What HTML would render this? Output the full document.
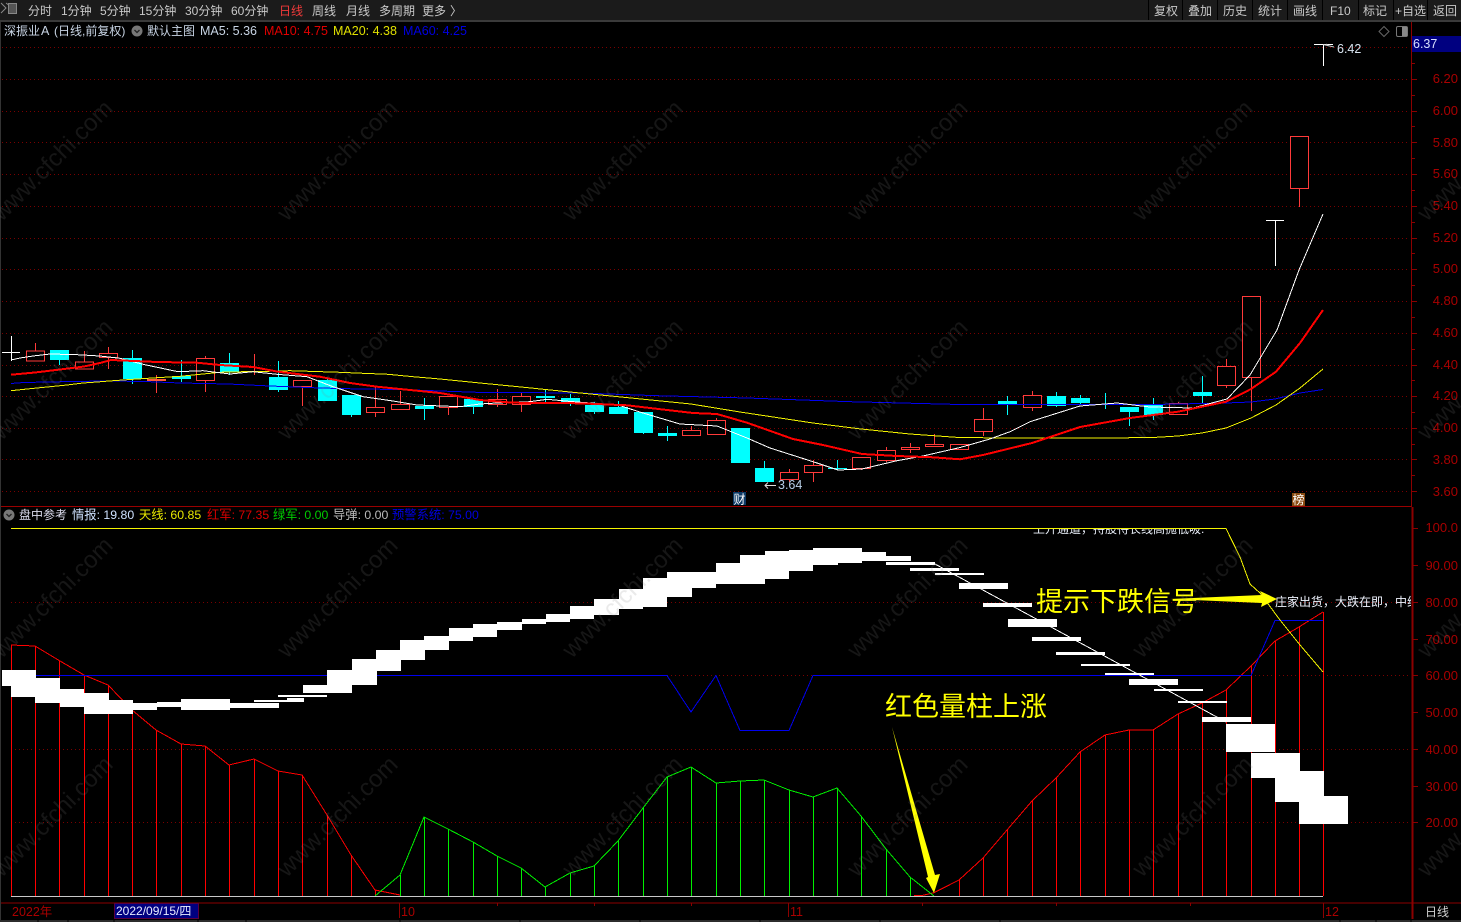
<!DOCTYPE html>
<html lang="zh">
<head>
<meta charset="utf-8">
<title>深振业A</title>
<style>
html,body{margin:0;padding:0;background:#000;width:1461px;height:922px;overflow:hidden}
svg{display:block;position:absolute;left:0;top:0}
text{font-family:"Liberation Sans","Noto Sans CJK SC",sans-serif;font-size:12px}
.tb text{fill:#c9c9c9}
.ax text{fill:#a80000;font-size:13px;text-anchor:end}
.wm text{font-size:24px;fill:rgba(128,128,128,.17);text-anchor:middle}
</style>
</head>
<body>
<svg width="1461" height="922" viewBox="0 0 1461 922" xmlns="http://www.w3.org/2000/svg" shape-rendering="crispEdges">
<defs>
<clipPath id="cp1"><rect x="1000" y="529" width="260" height="10"/></clipPath>
<clipPath id="cp2"><rect x="1270" y="590" width="141" height="25"/></clipPath>
</defs>

<!-- toolbar -->
<rect x="0" y="0" width="1461" height="20" fill="#1b1b1b"/>
<rect x="0" y="20" width="1461" height="2" fill="#3a3a3a"/>
<g fill="none" stroke="#8a8a8a" stroke-width="1" shape-rendering="geometricPrecision">
<path d="M1 3L6 8L1 13M6 3L10 6"/>
<rect x="8.500" y="3.500" width="8" height="10" fill="#555" stroke="#888"/>
</g>
<g class="tb">
<text x="28" y="15">分时</text>
<text x="61" y="15">1分钟</text>
<text x="100" y="15">5分钟</text>
<text x="139" y="15">15分钟</text>
<text x="185" y="15">30分钟</text>
<text x="231" y="15">60分钟</text>
<text x="279" y="15" style="fill:#f03a3a">日线</text>
<text x="312" y="15">周线</text>
<text x="346" y="15">月线</text>
<text x="379" y="15">多周期</text>
<text x="422" y="15">更多</text>
<text x="450" y="15">〉</text>
<text x="1154" y="15">复权</text>
<text x="1188" y="15">叠加</text>
<text x="1223" y="15">历史</text>
<text x="1258" y="15">统计</text>
<text x="1293" y="15">画线</text>
<text x="1330" y="15">F10</text>
<text x="1363" y="15">标记</text>
<text x="1395" y="15">+自选</text>
<text x="1433" y="15">返回</text>
</g>
<path d="M1148.500 0V20M1182.500 0V20M1217.500 0V20M1252.500 0V20M1287.500 0V20M1322.500 0V20M1358.500 0V20M1393.500 0V20M1427.500 0V20" stroke="#000" stroke-width="1"/>

<!-- grid -->
<g stroke="#7a0000" stroke-width="1" stroke-dasharray="1 3" fill="none">
<path d="M2 47.500H1408M2 79.500H1408M2 111.500H1408M2 142.500H1408M2 174.500H1408M2 206.500H1408M2 238.500H1408M2 269.500H1408M2 301.500H1408M2 333.500H1408M2 365.500H1408M2 396.500H1408M2 428.500H1408M2 459.500H1408M2 491.500H1408"/>
<path d="M11 602.500H1408M11 675.500H1408M11 749.500H1408M11 822.500H1408"/>
</g>

<!-- legend top -->
<text x="4" y="35" fill="#c8d4e4">深振业</text>
<text x="41" y="35" fill="#c8d4e4" style="font-size:12.500px">A</text>
<text x="54" y="35" fill="#c8d4e4">(日线,前复权)</text>
<circle cx="137" cy="31" r="5.500" fill="#777" shape-rendering="geometricPrecision"/>
<path d="M134.500 30L137 32.500L139.500 30" stroke="#222" stroke-width="1.300" fill="none" shape-rendering="geometricPrecision"/>
<text x="147" y="35" fill="#c8d4e4">默认主图</text>
<text x="200" y="35" fill="#c8d4e4" style="font-size:12.500px">MA5: 5.36</text>
<text x="264" y="35" fill="#e00000" style="font-size:12.500px">MA10: 4.75</text>
<text x="333" y="35" fill="#e0e000" style="font-size:12.500px">MA20: 4.38</text>
<text x="403" y="35" fill="#0000e0" style="font-size:12.500px">MA60: 4.25</text>
<path d="M1384 26.500L1389 31.500L1384 36.500L1379 31.500Z" fill="none" stroke="#666" shape-rendering="geometricPrecision"/>
<rect x="1396.500" y="26.500" width="11" height="10" rx="1.500" fill="none" stroke="#777" shape-rendering="geometricPrecision"/>
<rect x="1402" y="27" width="5" height="9" fill="#888"/>

<!-- candles wicks -->
<path fill="none" stroke="#ff3a3a" stroke-width="1" d="M35.500 343V351M84.500 351V362M108.500 347V369M156.500 375V393M205.500 356V392M254.500 354V375M302.500 380V406M375.500 387V417M400.500 391V404M448.500 407V415M497.500 389V407M521.500 393V412M691.500 426V436M716.500 418V421M789.500 469V482M813.500 460V482M861.500 468V470M886.500 447V462M910.500 443V453M934.500 434V447M983.500 408V436M1032.500 391V411M1178.500 402V404M1226.500 359V388M1251.500 377V411M1299.500 188V207"/>
<path fill="none" stroke="#00ffff" stroke-width="1" d="M59.500 360V365M132.500 350V384M181.500 360V382M229.500 353V375M278.500 361V392M327.500 378V401M351.500 395V417M424.500 398V420M473.500 399V414M545.500 390V403M570.500 394V406M594.500 402V414M618.500 401V414M643.500 412V434M667.500 426V441M764.500 461V482M837.500 460V470M1007.500 396V415M1056.500 392V407M1080.500 395V405M1105.500 393V409M1129.500 407V426M1153.500 398V420M1202.500 376V403"/>
<!-- cyan bodies -->
<g fill="#00ffff">
<rect x="50" y="350" width="19" height="10"/>
<rect x="123" y="358" width="19" height="21"/>
<rect x="172" y="376" width="19" height="3"/>
<rect x="220" y="363" width="19" height="9"/>
<rect x="269" y="377" width="19" height="13"/>
<rect x="318" y="380" width="19" height="21"/>
<rect x="342" y="395" width="19" height="20"/>
<rect x="415" y="406" width="19" height="3"/>
<rect x="464" y="399" width="19" height="8"/>
<rect x="536" y="396" width="19" height="2"/>
<rect x="561" y="398" width="19" height="5"/>
<rect x="585" y="405" width="19" height="7"/>
<rect x="609" y="407" width="19" height="7"/>
<rect x="634" y="412" width="19" height="21"/>
<rect x="658" y="433" width="19" height="3"/>
<rect x="731" y="428" width="19" height="35"/>
<rect x="755" y="468" width="19" height="14"/>
<rect x="828" y="468" width="19" height="1"/>
<rect x="998" y="401" width="19" height="3"/>
<rect x="1047" y="396" width="19" height="10"/>
<rect x="1071" y="398" width="19" height="5"/>
<rect x="1096" y="404" width="19" height="1"/>
<rect x="1120" y="407" width="19" height="5"/>
<rect x="1144" y="405" width="19" height="10"/>
<rect x="1193" y="392" width="19" height="4"/>
</g>
<!-- red hollow bodies -->
<g fill="#000" stroke="#ff3a3a" stroke-width="1">
<rect x="26.500" y="351" width="18" height="10"/>
<rect x="75.500" y="362" width="18" height="7"/>
<rect x="99.500" y="353.500" width="18" height="4"/>
<rect x="196.500" y="358.500" width="18" height="22"/>
<rect x="293.500" y="380.500" width="18" height="6"/>
<rect x="366.500" y="407.500" width="18" height="5"/>
<rect x="391.500" y="404.500" width="18" height="5"/>
<rect x="439.500" y="396.500" width="18" height="11"/>
<rect x="488.500" y="399.500" width="18" height="5"/>
<rect x="512.500" y="396.500" width="18" height="8"/>
<rect x="682.500" y="430.500" width="18" height="5"/>
<rect x="707.500" y="420.500" width="18" height="14"/>
<rect x="780.500" y="472.500" width="18" height="7"/>
<rect x="804.500" y="465.500" width="18" height="7"/>
<rect x="852.500" y="457.500" width="18" height="11"/>
<rect x="877.500" y="450.500" width="18" height="10"/>
<rect x="901.500" y="447.500" width="18" height="2"/>
<rect x="925.500" y="444.500" width="18" height="2"/>
<rect x="950.500" y="444.500" width="18" height="5"/>
<rect x="974.500" y="419.500" width="18" height="12"/>
<rect x="1023.500" y="395.500" width="18" height="12"/>
<rect x="1169.500" y="403.500" width="18" height="11"/>
<rect x="1217.500" y="366.500" width="18" height="19"/>
<rect x="1242.500" y="296.500" width="18" height="81"/>
<rect x="1290.500" y="136.500" width="18" height="52"/>
</g>
<rect x="147" y="379" width="19" height="2" fill="#ff5a3a"/>
<!-- white T / dojis -->
<path stroke="#fff" stroke-width="1" fill="none" d="M11.500 336V361M2 352.500H20M1275.500 220V266M1266 220.500H1284M1323.500 44V66M1314 44.500H1333"/>

<!-- MAs -->
<polyline fill="none" stroke="#0000ee" stroke-width="1" points="11,383.500 24,382.500 72,381.500 108,381 145,381.500 180,383 228,384 270,386 320,388 360,389 400,389.500 440,391 477,392.300 580,393 657,395.700 747,398 850,401.700 960,404.500 1153,404.500 1226,403 1251,402 1275,399 1300,393 1323,389.500"/>
<polyline fill="none" stroke="#f4f400" stroke-width="1" points="11,390.700 30,388.700 50,386.700 67,385 83,383 97,382 113,380.700 133,379.300 157,377.700 180,376.300 200,374.300 220,372.300 243,371.700 267,371.300 290,370.700 340,372.300 363,373.300 388,374.300 413,376.700 432,378.300 443,379.300 467,381.700 480,383 521,387 570,392 618,396.700 691,404 740,412 813,423 861,429 910,434 959,437.500 1007,438 1056,438 1105,438 1153,437.500 1178,436 1202,433 1226,428 1251,418 1276,405 1300,388 1323,369"/>
<polyline fill="none" stroke="#ffffff" stroke-width="1" points="11,360 20,358 33,356 50,354 77,354.700 100,356 120,358.300 143,364.300 178,371.700 203,370.700 230,374 253,371.700 277,374.300 307,376.700 333,386.700 363,396.700 393,401 417,405 460,406.700 480,404 497,403 530,401.700 547,399.300 573,401.700 618,405 643,413 680,424 717,426 747,438 770,448 813,461.700 838,470 862,469 897,460.700 923,456 960,447.500 990,439 1010,431.700 1030,421.700 1080,406 1117,403 1150,407 1193,408 1213,402.700 1227,399 1250,375 1277,330 1299,270 1323,214"/>
<polyline fill="none" stroke="#ff0000" stroke-width="2" points="11,374.700 35,372.500 60,369.500 84,366.500 100,363 111,360 157,362 197,362.700 220,365 253,367 278,371.700 320,376.700 350,383 377,386.700 410,390 440,393 480,400 513,402.700 580,403.300 627,405.300 667,410 693,413 717,414 747,422.700 793,439 823,445 862,454 897,456 933,457.300 960,459.300 983,455 1032,443 1080,427 1130,418 1178,411.700 1226,401.700 1251,389 1276,371.700 1300,343 1323,310"/>

<!-- annotations top -->
<text x="1337" y="53" fill="#d8e4f0" style="font-size:12.500px">6.42</text>
<path d="M1323 44.500L1334 47M1326 44L1329 46" stroke="#ccc" fill="none" shape-rendering="geometricPrecision"/>
<text x="778" y="489" fill="#b8cfe8" style="font-size:12.500px">3.64</text>
<path d="M776 485.500H765M768 482.500L765 485.500L768 488.500" stroke="#ddd" fill="none" shape-rendering="geometricPrecision"/>
<rect x="733" y="492" width="13" height="13" fill="#0d3a66"/>
<text x="733.500" y="503.500" fill="#fff">财</text>
<rect x="1292" y="493" width="13" height="13" fill="#8a4a10"/>
<text x="1292.500" y="504" fill="#fff">榜</text>

<!-- lower panel -->
<path d="M0 506.500H1411" stroke="#9a0000" stroke-width="1"/>
<circle cx="9" cy="515" r="5.500" fill="#777" shape-rendering="geometricPrecision"/>
<path d="M6.500 514L9 516.500L11.500 514" stroke="#222" stroke-width="1.300" fill="none" shape-rendering="geometricPrecision"/>
<text x="19" y="519" fill="#dde">盘中参考</text>
<text x="72" y="519" fill="#cfe2ff" style="font-size:12.300px">情报: 19.80</text>
<text x="139" y="519" fill="#e8e800" style="font-size:12.300px">天线: 60.85</text>
<text x="207" y="519" fill="#dd0000" style="font-size:12.300px">红军: 77.35</text>
<text x="273" y="519" fill="#00cc00" style="font-size:12.300px">绿军: 0.00</text>
<text x="333" y="519" fill="#bbbbbb" style="font-size:12.300px">导弹: 0.00</text>
<text x="392" y="519" fill="#0000e0" style="font-size:12.300px">预警系统: 75.00</text>

<!-- red / green bars -->
<path fill="none" stroke="#ff0000" stroke-width="1" d="M11.500 896V645M35.500 896V646M59.500 896V661M84.500 896V675M108.500 896V685M132.500 896V710M156.500 896V730M181.500 896V744M205.500 896V746M229.500 896V765M254.500 896V759M278.500 896V771M302.500 896V775M327.500 896V815M351.500 896V855M375.500 896V890M959.500 896V880M983.500 896V858M1007.500 896V830M1032.500 896V801M1056.500 896V778M1080.500 896V752M1105.500 896V735M1129.500 896V730M1153.500 896V730M1178.500 896V714M1202.500 896V703M1226.500 896V690M1251.500 896V666M1275.500 896V641M1299.500 896V627M1323.500 896V612"/>
<polyline fill="none" stroke="#ff0000" stroke-width="1" points="11,645 35,646 60,661 84,675 108,685 132,710 156,730 181,744 205,746 229,765 254,759 278,771 302,775 327,815 351,855 375,890 385,892 400,895"/>
<polyline fill="none" stroke="#ff0000" stroke-width="1" points="914,895.500 922,895.500 934,892.700 959,880 983,858 1007,830 1032,801 1056,778 1080,752 1105,735 1129,730 1153,730 1178,714 1202,703 1226,690 1251,666 1275,641 1299,627 1323,612"/>
<path fill="none" stroke="#00ee00" stroke-width="1" d="M400.500 896V875M424.500 896V817M448.500 896V829M473.500 896V842M497.500 896V856M521.500 896V868M545.500 896V887M570.500 896V873M594.500 896V866M618.500 896V841M643.500 896V808M667.500 896V777M691.500 896V767M716.500 896V783M740.500 896V781M764.500 896V780M789.500 896V790M813.500 896V797M837.500 896V788M861.500 896V816M886.500 896V849M910.500 896V877"/>
<polyline fill="none" stroke="#00ee00" stroke-width="1" points="375,896 400,875 424,817 448,829 473,842 497,856 521,868 545,887 570,873 594,866 618,841 643,808 667,777 691,767 716,783 740,781 764,780 789,790 813,797 837,788 861,816 886,849 910,877 934,896"/>
<path d="M11 896.500H1323" stroke="#c8c8c8" stroke-width="1"/>

<!-- blue & yellow indicator lines -->
<polyline fill="none" stroke="#0000ee" stroke-width="1" points="36,675.500 667,675.500 691,712 716,675.500 740,730.500 789,730.500 813,675.500 1251,675.500 1275,620.500 1323,620.500"/>
<polyline fill="none" stroke="#f4f400" stroke-width="1" points="11,528.500 1226,528.500 1240,557 1250,584 1260,593 1280,620 1300,645 1323,672"/>

<!-- white blocks -->
<g fill="#fff">
<rect x="2" y="670" width="34" height="16"/>
<rect x="11" y="670" width="25" height="27"/>
<rect x="35" y="678" width="25" height="25"/>
<rect x="60" y="689" width="24" height="18"/>
<rect x="84" y="693" width="25" height="21"/>
<rect x="109" y="700" width="24" height="14"/>
<rect x="133" y="703" width="24" height="7"/>
<rect x="157" y="702" width="24" height="5"/>
<rect x="181" y="699" width="49" height="11"/>
<rect x="230" y="703" width="49" height="5"/>
<rect x="254" y="700" width="49" height="2"/>
<rect x="287" y="698" width="17" height="4"/>
<rect x="278" y="695" width="49" height="2"/>
<rect x="303" y="685" width="49" height="8"/>
<rect x="327" y="670" width="25" height="23"/>
<rect x="352" y="659" width="25" height="26"/>
<rect x="376" y="650" width="25" height="21"/>
<rect x="400" y="640" width="25" height="20"/>
<rect x="424" y="636" width="25" height="14"/>
<rect x="449" y="628" width="24" height="13"/>
<rect x="473" y="624" width="24" height="13"/>
<rect x="497" y="622" width="25" height="8"/>
<rect x="522" y="619" width="24" height="5"/>
<rect x="546" y="614" width="24" height="8"/>
<rect x="570" y="606" width="24" height="13"/>
<rect x="594" y="599" width="25" height="16"/>
<rect x="619" y="589" width="24" height="20"/>
<rect x="643" y="578" width="24" height="29"/>
<rect x="667" y="572" width="25" height="25"/>
<rect x="692" y="572" width="24" height="16"/>
<rect x="716" y="563" width="24" height="21"/>
<rect x="740" y="555" width="25" height="29"/>
<rect x="765" y="551" width="24" height="28"/>
<rect x="789" y="550" width="24" height="21"/>
<rect x="813" y="548" width="25" height="17"/>
<rect x="838" y="548" width="24" height="15"/>
<rect x="862" y="552" width="24" height="9"/>
<rect x="886" y="556" width="25" height="5"/>
<rect x="886" y="562" width="49" height="3"/>
<rect x="910" y="568" width="49" height="3"/>
<rect x="935" y="573" width="49" height="2"/>
<rect x="959" y="583" width="49" height="6"/>
<rect x="983" y="603" width="49" height="4"/>
<rect x="1008" y="619" width="49" height="8"/>
<rect x="1032" y="637" width="49" height="4"/>
<rect x="1056" y="652" width="49" height="3"/>
<rect x="1081" y="664" width="49" height="2"/>
<rect x="1105" y="673" width="49" height="2"/>
<rect x="1129" y="679" width="49" height="6"/>
<rect x="1154" y="689" width="49" height="2"/>
<rect x="1178" y="701" width="49" height="2"/>
<rect x="1202" y="717" width="49" height="5"/>
<rect x="1226" y="724" width="49" height="28"/>
<rect x="1251" y="753" width="49" height="25"/>
<rect x="1275" y="771" width="49" height="31"/>
<rect x="1299" y="796" width="49" height="28"/>
</g>
<path d="M935 564L1226 722" stroke="#fff" stroke-width="1" fill="none"/>

<!-- clipped labels -->
<g clip-path="url(#cp1)"><text x="1033" y="533" fill="#e8eef8">上升通道，持股待长线高抛低吸.</text></g>
<g clip-path="url(#cp2)"><text x="1275" y="606" fill="#f0f4ff">庄家出货，大跌在即，中线离场</text></g>

<!-- annotation arrows -->
<text x="1036" y="611" fill="#ffff00" style="font-size:27px">提示下跌信号</text>
<text x="885" y="716" fill="#ffff00" style="font-size:27px">红色量柱上涨</text>
<polygon fill="#ffff00" shape-rendering="geometricPrecision" points="1170,599 1262,595 1260,591 1277,599 1261,607 1262,603"/>
<polygon fill="#ffff00" shape-rendering="geometricPrecision" points="892,727 935,875 940,874 934,893 926,878 928,877"/>

<!-- right axis -->
<path d="M1411.500 22V507" stroke="#8b0000" stroke-width="1"/>
<path d="M1412.500 507V919" stroke="#8b0000" stroke-width="2"/>
<path stroke="#8b0000" fill="none" d="M1411 63.500H1415M1411 79.500H1417M1411 95.500H1415M1411 111.500H1417M1411 126.500H1415M1411 142.500H1417M1411 158.500H1415M1411 174.500H1417M1411 190.500H1415M1411 206.500H1417M1411 222.500H1415M1411 238.500H1417M1411 253.500H1415M1411 269.500H1417M1411 285.500H1415M1411 301.500H1417M1411 317.500H1415M1411 333.500H1417M1411 349.500H1415M1411 365.500H1417M1411 380.500H1415M1411 396.500H1417M1411 412.500H1415M1411 428.500H1417M1411 444.500H1415M1411 459.500H1417M1411 475.500H1415M1411 491.500H1417"/>
<path stroke="#8b0000" fill="none" d="M1413 528.500H1418M1413 565.500H1418M1413 602.500H1418M1413 639.500H1418M1413 675.500H1418M1413 712.500H1418M1413 749.500H1418M1413 786.500H1418M1413 822.500H1418"/>
<g class="ax">
<text x="1458" y="83">6.20</text>
<text x="1458" y="115">6.00</text>
<text x="1458" y="147">5.80</text>
<text x="1458" y="178">5.60</text>
<text x="1458" y="210">5.40</text>
<text x="1458" y="242">5.20</text>
<text x="1458" y="273">5.00</text>
<text x="1458" y="305">4.80</text>
<text x="1458" y="337">4.60</text>
<text x="1458" y="369">4.40</text>
<text x="1458" y="400">4.20</text>
<text x="1458" y="432">4.00</text>
<text x="1458" y="464">3.80</text>
<text x="1458" y="496">3.60</text>
<text x="1458" y="532">100.0</text>
<text x="1458" y="570">90.00</text>
<text x="1458" y="607">80.00</text>
<text x="1458" y="644">70.00</text>
<text x="1458" y="680">60.00</text>
<text x="1458" y="717">50.00</text>
<text x="1458" y="754">40.00</text>
<text x="1458" y="791">30.00</text>
<text x="1458" y="827">20.00</text>
</g>
<rect x="1412" y="36" width="49" height="16" fill="#000080"/>
<text x="1413" y="48" fill="#d8e0ff" style="font-size:12.500px">6.37</text>

<!-- bottom axis -->
<path d="M0 903H1461" stroke="#8b0000" stroke-width="1"/>
<path d="M399.500 903V918M788.500 903V917M1323.500 903V918M594.500 903V906M691.500 903V906M922.500 903V906M1056.500 903V906M1190.500 903V906M497.500 903V906" stroke="#8b0000" fill="none"/>
<text x="12" y="916" fill="#aa0000" style="font-size:12.500px">2022年</text>
<rect x="114.500" y="903.500" width="84" height="15" fill="#000080" stroke="#5a0040"/>
<text x="116" y="915" fill="#e8ecff">2022/09/15/四</text>
<text x="401" y="916" fill="#aa0000" style="font-size:12.500px">10</text>
<text x="790" y="916" fill="#aa0000" style="font-size:12.500px">11</text>
<text x="1325" y="916" fill="#aa0000" style="font-size:12.500px">12</text>
<text x="1425" y="916" fill="#d0d0d0">日线</text>
<rect x="0" y="920" width="1461" height="2" fill="#2c2c2c"/>
<path d="M38 920V922M68 920V922M114 920V922M198 920V922M246 920V922M400 920V922M520 920V922M640 920V922M760 920V922M880 920V922M1000 920V922M1340 920V922M1376 920V922M1411 920V922" stroke="#000"/>
<rect x="0" y="22" width="1" height="898" fill="#333"/>

<!-- watermark -->
<g class="wm" shape-rendering="geometricPrecision">
<text transform="translate(58 166) rotate(-45)">www.cfchi.com</text>
<text transform="translate(343 166) rotate(-45)">www.cfchi.com</text>
<text transform="translate(628 166) rotate(-45)">www.cfchi.com</text>
<text transform="translate(913 166) rotate(-45)">www.cfchi.com</text>
<text transform="translate(1198 166) rotate(-45)">www.cfchi.com</text>
<text transform="translate(1483 166) rotate(-45)">www.cfchi.com</text>
<text transform="translate(58 385) rotate(-45)">www.cfchi.com</text>
<text transform="translate(343 385) rotate(-45)">www.cfchi.com</text>
<text transform="translate(628 385) rotate(-45)">www.cfchi.com</text>
<text transform="translate(913 385) rotate(-45)">www.cfchi.com</text>
<text transform="translate(1198 385) rotate(-45)">www.cfchi.com</text>
<text transform="translate(1483 385) rotate(-45)">www.cfchi.com</text>
<text transform="translate(58 603) rotate(-45)">www.cfchi.com</text>
<text transform="translate(343 603) rotate(-45)">www.cfchi.com</text>
<text transform="translate(628 603) rotate(-45)">www.cfchi.com</text>
<text transform="translate(913 603) rotate(-45)">www.cfchi.com</text>
<text transform="translate(1198 603) rotate(-45)">www.cfchi.com</text>
<text transform="translate(1483 603) rotate(-45)">www.cfchi.com</text>
<text transform="translate(58 822) rotate(-45)">www.cfchi.com</text>
<text transform="translate(343 822) rotate(-45)">www.cfchi.com</text>
<text transform="translate(628 822) rotate(-45)">www.cfchi.com</text>
<text transform="translate(913 822) rotate(-45)">www.cfchi.com</text>
<text transform="translate(1198 822) rotate(-45)">www.cfchi.com</text>
<text transform="translate(1483 822) rotate(-45)">www.cfchi.com</text>
</g>
</svg>
</body>
</html>
